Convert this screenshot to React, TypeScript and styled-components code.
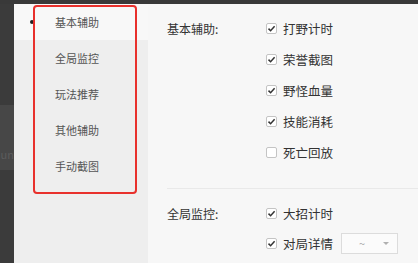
import React from "react";
import styled, { createGlobalStyle } from "styled-components";

const GlobalStyle = createGlobalStyle`
  html, body {
    margin: 0;
    padding: 0;
    overflow: hidden;
    background: #3a3a3a;
  }
  * {
    box-sizing: border-box;
  }
`;

const Window = styled.div`
  width: 418px;
  height: 263px;
  display: flex;
  flex-direction: column;
  overflow: hidden;
  font-family: "Noto Sans CJK SC", "Noto Sans", sans-serif;
`;

const TopBar = styled.div`
  height: 4px;
  background: #393939;
  flex-shrink: 0;
`;

const Body = styled.div`
  flex: 1;
  display: flex;
  min-height: 0;
`;

const DarkStrip = styled.div`
  width: 14px;
  background: #3b3b3b;
  padding-top: 101px;
  flex-shrink: 0;
`;

const StripBand = styled.div`
  height: 65px;
  background: #474747;
  color: #5c5c5c;
  font-size: 11px;
  line-height: 11px;
  padding-top: 44px;
  overflow: hidden;
  white-space: nowrap;
  text-align: right;
`;

const Sidebar = styled.div`
  position: relative;
  width: 134px;
  background: #eeeeee;
  flex-shrink: 0;
`;

const MenuItem = styled.div<{ $active?: boolean }>`
  height: 36px;
  display: flex;
  align-items: center;
  padding-left: 16px;
  font-size: 11px;
  color: #555;
  background: ${(p) => (p.$active ? "#f8f8f8" : "transparent")};
`;

const Dot = styled.span<{ $visible?: boolean }>`
  width: 4px;
  height: 4px;
  border-radius: 50%;
  background: ${(p) => (p.$visible ? "#222" : "transparent")};
  margin-right: 21px;
`;

const Highlight = styled.div`
  position: absolute;
  left: 19px;
  top: 1px;
  width: 104px;
  height: 189px;
  border: 2px solid #e8302c;
  border-radius: 4px;
  pointer-events: none;
`;

const Main = styled.div`
  flex: 1;
  background: #f7f7f7;
  padding-left: 19px;
  overflow: hidden;
`;

const Section = styled.div<{ $top: number }>`
  display: grid;
  grid-template-columns: 99px 1fr;
  padding-top: ${(p) => p.$top}px;
`;

const SectionLabel = styled.div<{ $row: number }>`
  height: ${(p) => p.$row}px;
  display: flex;
  align-items: center;
  font-size: 12px;
  color: #333;
`;

const Options = styled.div``;

const OptionRow = styled.div<{ $row: number }>`
  height: ${(p) => p.$row}px;
  display: flex;
  align-items: center;
  font-size: 12.5px;
  color: #333;
  white-space: nowrap;
`;

const Box = styled.span`
  width: 11px;
  height: 11px;
  border: 1px solid #c4c4c4;
  border-radius: 2px;
  background: #fff;
  margin-right: 6px;
  display: flex;
  align-items: center;
  justify-content: center;
`;

const Divider = styled.div`
  height: 1px;
  background: #e9e9e9;
  margin-top: 20px;
`;

const Select = styled.div`
  width: 57px;
  height: 21px;
  margin-left: 8px;
  border: 1px solid #dcdcdc;
  background: #fbfbfb;
  display: flex;
  align-items: center;
  justify-content: space-between;
  padding: 0 8px 0 17px;
  color: #aaa;
  font-size: 11px;
`;

const Caret = styled.span`
  width: 0;
  height: 0;
  border-left: 3px solid transparent;
  border-right: 3px solid transparent;
  border-top: 3px solid #b0b0b0;
`;

const Hint = styled.div`
  padding-left: 118px;
  margin-top: 3px;
  font-size: 11px;
  color: #d2d2d2;
  white-space: nowrap;
`;

function Check({ on }: { on?: boolean }) {
  return (
    <Box>
      {on && (
        <svg width="9" height="9" viewBox="0 0 9 9">
          <polyline
            points="1.5,4.6 3.6,6.7 7.6,2.3"
            fill="none"
            stroke="#333"
            strokeWidth="1.5"
          />
        </svg>
      )}
    </Box>
  );
}

const menu = ["基本辅助", "全局监控", "玩法推荐", "其他辅助", "手动截图"];

const basic = [
  { label: "打野计时", on: true },
  { label: "荣誉截图", on: true },
  { label: "野怪血量", on: true },
  { label: "技能消耗", on: true },
  { label: "死亡回放", on: false },
];

export default function App() {
  return (
    <>
      <GlobalStyle />
      <Window>
        <TopBar />
        <Body>
          <DarkStrip>
            <StripBand>un</StripBand>
          </DarkStrip>
          <Sidebar>
            {menu.map((m, i) => (
              <MenuItem key={m} $active={i === 0}>
                <Dot $visible={i === 0} />
                {m}
              </MenuItem>
            ))}
            <Highlight />
          </Sidebar>
          <Main>
            <Section $top={9}>
              <SectionLabel $row={31}>基本辅助:</SectionLabel>
              <Options>
                {basic.map((b) => (
                  <OptionRow key={b.label} $row={31}>
                    <Check on={b.on} />
                    {b.label}
                  </OptionRow>
                ))}
              </Options>
            </Section>
            <Divider />
            <Section $top={9}>
              <SectionLabel $row={30}>全局监控:</SectionLabel>
              <Options>
                <OptionRow $row={30}>
                  <Check on />
                  大招计时
                </OptionRow>
                <OptionRow $row={30}>
                  <Check on />
                  对局详情
                  <Select>
                    ~
                    <Caret />
                  </Select>
                </OptionRow>
              </Options>
            </Section>
            <Hint>以持续捕捉局内对局信息展示</Hint>
          </Main>
        </Body>
      </Window>
    </>
  );
}
